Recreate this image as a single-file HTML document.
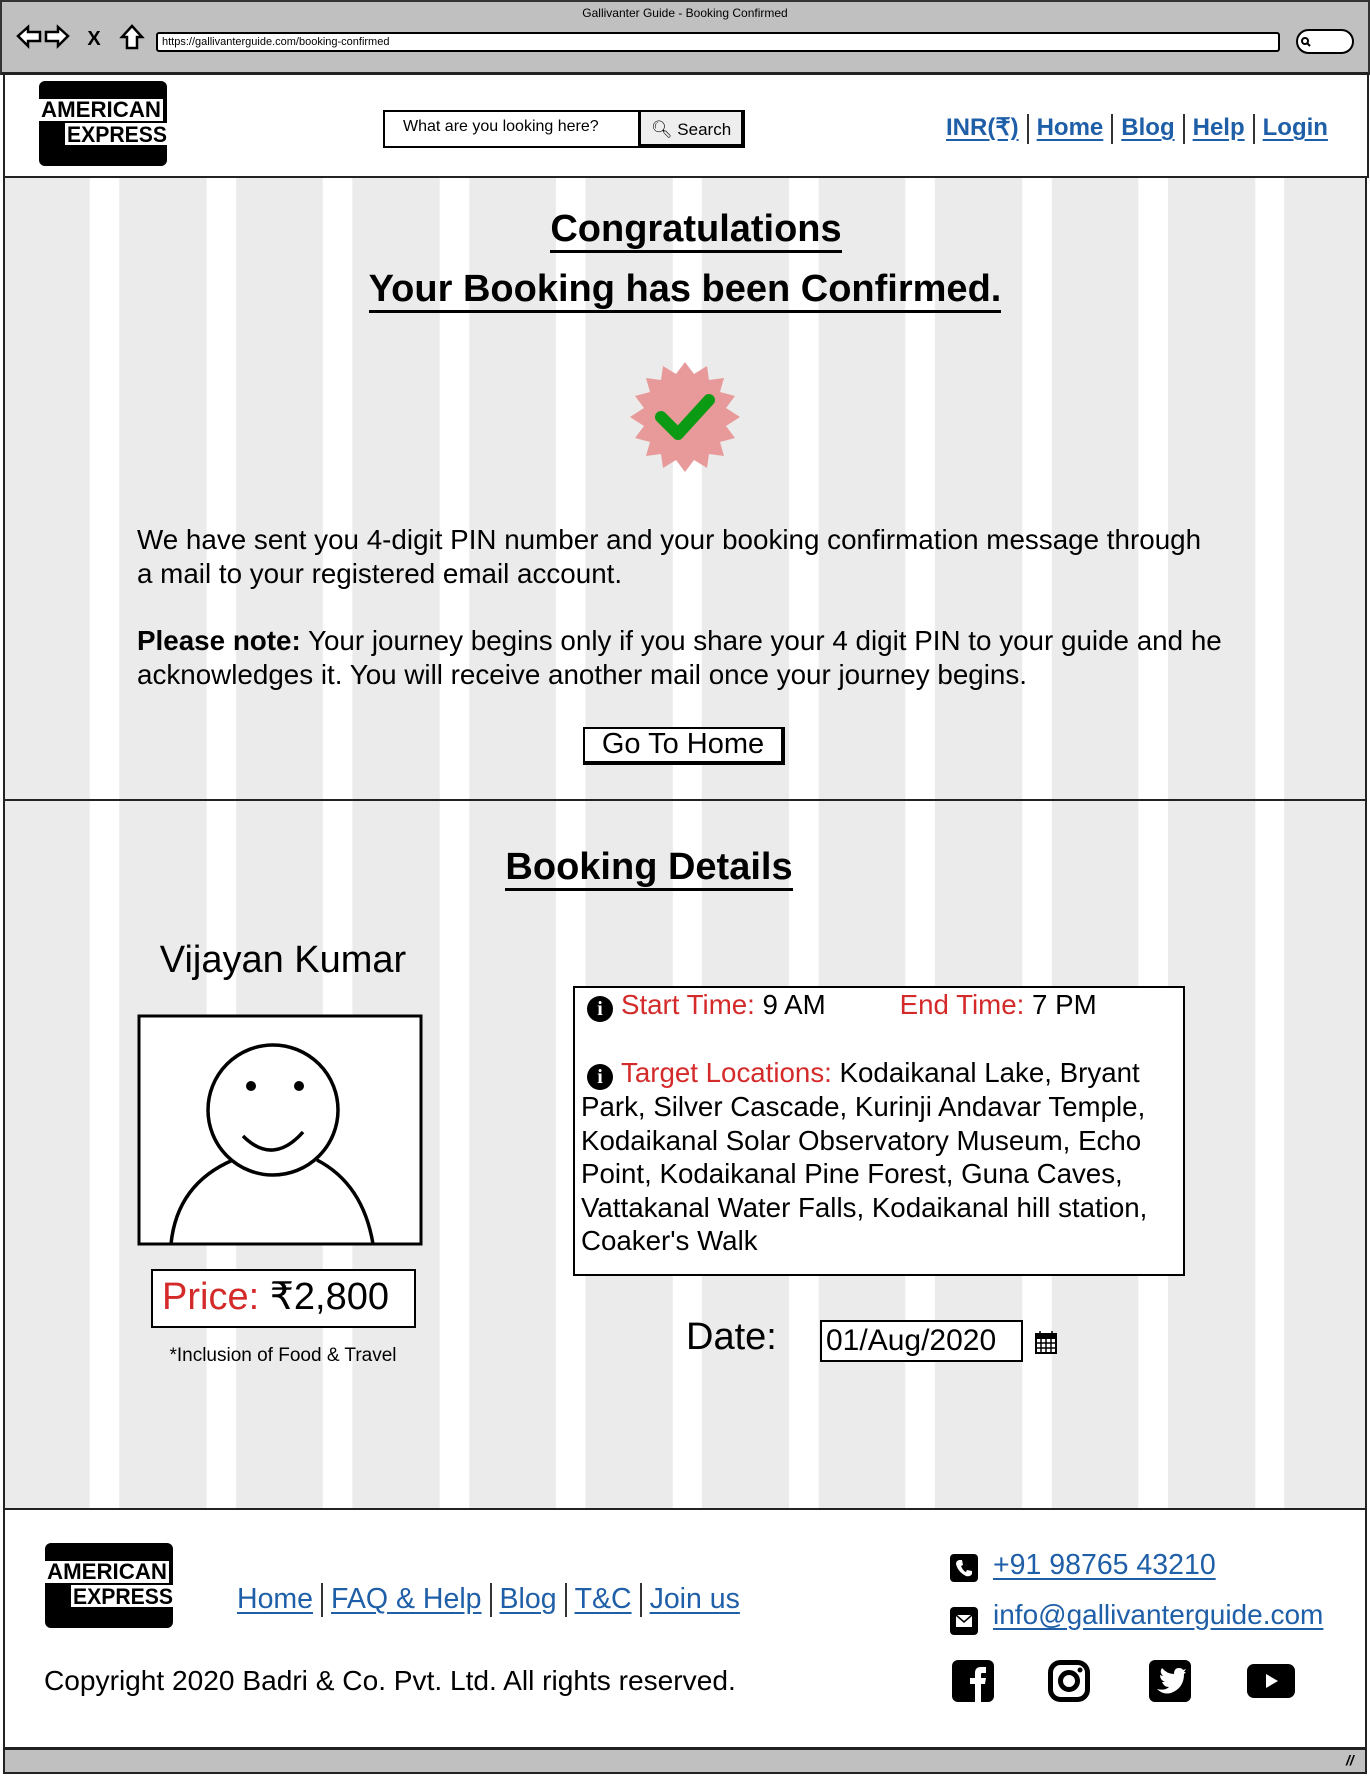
<!DOCTYPE html>
<html><head><meta charset="utf-8"><style>
*{box-sizing:border-box;margin:0;padding:0}
body{width:1370px;height:1776px;position:relative;background:#fff;font-family:"Liberation Sans",sans-serif;color:#000;overflow:hidden}
.a{position:absolute}
.lnk{color:#1f5fa8;text-decoration:underline;text-underline-offset:4px}
.sep{display:inline-block;width:2px;height:30px;background:#333;vertical-align:middle;margin:0 8px}
.c{text-align:center;white-space:nowrap}
.ic{display:inline-block;width:26px;height:26px;border-radius:50%;background:#000;color:#fff;font-weight:bold;font-size:20px;line-height:26px;text-align:center;font-family:'Liberation Serif',serif;vertical-align:-1px;margin:0 8px 0 6px}
</style></head><body>
<!-- browser chrome -->
<div class="a" style="left:0;top:0;width:1370px;height:75px;background:#c0c0c0;border:2px solid #333;border-bottom:3px solid #222"></div>
<div class="a c" style="left:0;width:1370px;top:6px;font-size:12px">Gallivanter Guide - Booking Confirmed</div>
<svg class="a" style="left:14px;top:22px" width="140" height="30" viewBox="0 0 140 30">
<path d="M4 14 L14 5 L14 10 L26 10 L26 19 L14 19 L14 24 Z" fill="#fff" stroke="#000" stroke-width="2.5"/>
<path d="M54 14 L44 5 L44 10 L32 10 L32 19 L44 19 L44 24 Z" fill="#fff" stroke="#000" stroke-width="2.5"/>
<text x="80" y="23" font-size="20" font-weight="bold" font-family="Liberation Sans" text-anchor="middle">X</text>
<path d="M118 4 L128 15 L123 15 L123 26 L113 26 L113 15 L108 15 Z" fill="#fff" stroke="#000" stroke-width="2.5"/>
</svg>
<div class="a" style="left:156px;top:32px;width:1124px;height:20px;background:#fff;border:2px solid #000;border-radius:3px;font-size:11px;padding-left:4px;line-height:16px">https://gallivanterguide.com/booking-confirmed</div>
<div class="a" style="left:1296px;top:29px;width:58px;height:25px;background:#fff;border:2px solid #000;border-radius:13px"></div>
<svg class="a" style="left:1300px;top:36px" width="12" height="12"><circle cx="5" cy="5" r="3" fill="none" stroke="#000" stroke-width="2"/><path d="M7 7 L10 10" stroke="#000" stroke-width="2"/></svg>

<!-- header -->
<div class="a" style="left:3px;top:75px;width:1366px;height:103px;background:#fff;border-left:2px solid #222;border-right:2px solid #222;border-bottom:2px solid #222"></div>
<svg class="a" style="left:39px;top:81px" width="130" height="86" viewBox="0 0 130 86">
<rect x="0" y="0" width="128" height="85" rx="6" fill="#000"/>
<rect x="0" y="18" width="124" height="22" fill="#fff"/><rect x="26" y="42" width="104" height="22" fill="#fff"/>
<text x="2" y="36" font-size="22" font-weight="bold" font-family="Liberation Sans" textLength="120" lengthAdjust="spacingAndGlyphs">AMERICAN</text>
<text x="28" y="61" font-size="22" font-weight="bold" font-family="Liberation Sans" textLength="100" lengthAdjust="spacingAndGlyphs">EXPRESS</text>
</svg>
<div class="a" style="left:383px;top:110px;width:257px;height:38px;background:#fff;border:2px solid #000;font-size:16px;padding:6px 0 0 18px">What are you looking here?</div>
<div class="a" style="left:639px;top:110px;width:106px;height:38px;background:#eee;border:2px solid #000;border-bottom-width:4px;border-right-width:4px;font-size:17px;padding:8px 0 0 10px">&#x1F50D;&#xFE0E; Search</div>
<div class="a" style="left:946px;top:113px;font-size:24px;font-weight:bold;white-space:nowrap"><span class="lnk">INR(₹)</span><span class="sep"></span><span class="lnk">Home</span><span class="sep"></span><span class="lnk">Blog</span><span class="sep"></span><span class="lnk">Help</span><span class="sep"></span><span class="lnk">Login</span></div>

<!-- striped content -->
<div class="a" style="left:3px;top:178px;width:1364px;height:1331px;border-left:2px solid #222;border-right:2px solid #222;background:repeating-linear-gradient(90deg,#ebebeb 0 87px,#fff 87px 116.5px);background-position:-2px 0"></div>
<div class="a" style="left:3px;top:799px;width:1364px;height:2px;background:#222"></div>
<div class="a" style="left:3px;top:1508px;width:1364px;height:2px;background:#222"></div>

<div class="a c" style="left:0;width:1392px;top:208px;font-size:38px;font-weight:bold"><span style="border-bottom:3px solid #000">Congratulations</span></div>
<div class="a c" style="left:0;width:1370px;top:268px;font-size:38px;font-weight:bold"><span style="border-bottom:3px solid #000">Your Booking has been Confirmed.</span></div>

<svg class="a" style="left:628px;top:360px" width="114" height="114" viewBox="-57 -57 114 114">
<polygon fill="#e89a9a" points="0,-55 9,-43 22,-51 24,-37 39,-39 35,-25 50,-21 41,-9 55,0 41,9 50,21 35,25 39,39 24,37 22,51 9,43 0,55 -9,43 -22,51 -24,37 -39,39 -35,25 -50,21 -41,9 -55,0 -41,-9 -50,-21 -35,-25 -39,-39 -24,-37 -22,-51 -9,-43"/>
<path d="M-24 0 L-7 17 L24 -17" fill="none" stroke="#0a9a14" stroke-width="12" stroke-linecap="round" stroke-linejoin="round"/>
</svg>

<div class="a" style="left:137px;top:523px;width:1075px;font-size:27.8px;line-height:34px">We have sent you 4-digit PIN number and your booking confirmation message through a mail to your registered email account.</div>
<div class="a" style="left:137px;top:624px;width:1100px;font-size:27.8px;line-height:34px"><b>Please note:</b> Your journey begins only if you share your 4 digit PIN to your guide and he acknowledges it. You will receive another mail once your journey begins.</div>
<div class="a c" style="left:583px;top:727px;width:202px;height:38px;background:#fff;border:2px solid #000;border-right-width:4px;border-bottom-width:4px;font-size:29px;line-height:30px">Go To Home</div>

<div class="a c" style="left:0;width:1298px;top:846px;font-size:38px;font-weight:bold"><span style="border-bottom:3px solid #000">Booking Details</span></div>
<div class="a c" style="left:140px;width:286px;top:939px;font-size:38px">Vijayan Kumar</div>
<svg class="a" style="left:137px;top:1014px" width="286" height="232" viewBox="0 0 286 232">
<rect x="2" y="2" width="282" height="228" fill="#fff" stroke="#000" stroke-width="3"/>
<circle cx="136" cy="96" r="65" fill="none" stroke="#000" stroke-width="3.5"/>
<circle cx="114" cy="72" r="5"/><circle cx="162" cy="72" r="5"/>
<path d="M106 122 Q136 152 166 118" fill="none" stroke="#000" stroke-width="3.5"/>
<path d="M96 146 Q40 170 34 230 M180 146 Q226 170 236 230" fill="none" stroke="#000" stroke-width="3.5"/>
</svg>
<div class="a" style="left:151px;top:1269px;width:265px;height:59px;background:#fff;border:2px solid #000;font-size:38px;line-height:52px;padding-left:9px;white-space:nowrap"><span style="color:#d42a2a">Price:</span> ₹2,800</div>
<div class="a c" style="left:140px;width:286px;top:1345px;font-size:19px">*Inclusion of Food &amp; Travel</div>

<div class="a" style="left:573px;top:986px;width:612px;height:290px;background:#fff;border:2px solid #000"></div>
<div class="a" style="left:581px;top:988px;width:602px;font-size:27.7px;line-height:33.6px">
<div style="white-space:nowrap"><span class="ic">i</span><span style="color:#d42a2a">Start Time:</span> 9 AM<span style="display:inline-block;width:74px"></span><span style="color:#d42a2a">End Time:</span> 7 PM</div>
<div style="height:34px"></div>
<div><span class="ic">i</span><span style="color:#d42a2a">Target Locations:</span> Kodaikanal Lake, Bryant Park, Silver Cascade, Kurinji Andavar Temple, Kodaikanal Solar Observatory Museum, Echo Point, Kodaikanal Pine Forest, Guna Caves, Vattakanal Water Falls, Kodaikanal hill station, Coaker's Walk</div>
</div>
<div class="a" style="left:686px;top:1316px;font-size:38px">Date:</div>
<div class="a" style="left:820px;top:1320px;width:203px;height:42px;background:#fff;border:2px solid #000;font-size:30px;line-height:38px;padding-left:4px">01/Aug/2020</div>
<svg class="a" style="left:1035px;top:1330px" width="22" height="24" viewBox="0 0 22 24"><rect x="1" y="4" width="20" height="19" fill="#fff" stroke="#000" stroke-width="2"/><rect x="1" y="4" width="20" height="5" fill="#000"/><path d="M5 1v6M17 1v6M1 13h20M1 18h20M6 9v14M11 9v14M16 9v14" stroke="#000" stroke-width="1.5"/></svg>

<!-- footer -->
<div class="a" style="left:3px;top:1510px;width:1364px;height:238px;background:#fff;border-left:2px solid #222;border-right:2px solid #222"></div>
<svg class="a" style="left:45px;top:1543px" width="130" height="86" viewBox="0 0 130 86">
<rect x="0" y="0" width="128" height="85" rx="6" fill="#000"/>
<rect x="0" y="18" width="124" height="22" fill="#fff"/><rect x="26" y="42" width="104" height="22" fill="#fff"/>
<text x="2" y="36" font-size="22" font-weight="bold" font-family="Liberation Sans" textLength="120" lengthAdjust="spacingAndGlyphs">AMERICAN</text>
<text x="28" y="61" font-size="22" font-weight="bold" font-family="Liberation Sans" textLength="100" lengthAdjust="spacingAndGlyphs">EXPRESS</text>
</svg>
<div class="a" style="left:237px;top:1583px;font-size:28.5px;white-space:nowrap"><span class="lnk">Home</span><span class="sep" style="margin:0 8px;height:34px"></span><span class="lnk">FAQ &amp; Help</span><span class="sep" style="margin:0 8px;height:34px"></span><span class="lnk">Blog</span><span class="sep" style="margin:0 8px;height:34px"></span><span class="lnk">T&amp;C</span><span class="sep" style="margin:0 8px;height:34px"></span><span class="lnk">Join us</span></div>
<div class="a" style="left:44px;top:1665px;font-size:28.1px;white-space:nowrap">Copyright 2020 Badri &amp; Co. Pvt. Ltd. All rights reserved.</div>

<svg class="a" style="left:950px;top:1554px" width="28" height="28" viewBox="0 0 28 28"><rect width="28" height="28" rx="4"/><path d="M9 6 L12 6 L13 11 L11 12 Q13 17 16 18 L17 16 L22 17 L22 20 Q20 23 16 22 Q8 18 6 10 Q6 7 9 6Z" fill="#fff"/></svg>
<svg class="a" style="left:950px;top:1607px" width="28" height="28" viewBox="0 0 28 28"><rect width="28" height="28" rx="4"/><rect x="6" y="8" width="16" height="12" fill="#fff"/><path d="M6 8 L14 15 L22 8" fill="none" stroke="#000" stroke-width="1.5"/></svg>
<div class="a" style="left:993px;top:1549px;font-size:28.5px"><span class="lnk">+91 98765 43210</span></div>
<div class="a" style="left:993px;top:1599px;font-size:28px"><span class="lnk">info@gallivanterguide.com</span></div>

<svg class="a" style="left:952px;top:1660px" width="42" height="42" viewBox="0 0 42 42"><rect width="42" height="42" rx="6"/><path d="M23 42 V24 H18 V18 H23 V13 Q23 7 29 7 H34 V13 H30 Q29 13 29 14 V18 H34 L33 24 H29 V42Z" fill="#fff"/></svg>
<svg class="a" style="left:1048px;top:1660px" width="42" height="42" viewBox="0 0 42 42"><rect x="2.5" y="2.5" width="37" height="37" rx="10" fill="none" stroke="#000" stroke-width="5"/><circle cx="21" cy="21" r="8.5" fill="none" stroke="#000" stroke-width="5"/><circle cx="32" cy="10" r="2.5"/></svg>
<svg class="a" style="left:1149px;top:1660px" width="42" height="42" viewBox="0 0 42 42"><rect width="42" height="42" rx="6"/><path d="M8 29 Q16 31 20 27 Q15 27 13 22 Q15 22 16 22 Q11 20 11 15 Q13 16 14 16 Q10 12 13 8 Q18 14 25 14 Q25 8 30 8 Q33 8 34 10 L37 9 L35 12 L37 12 L35 14 Q35 28 22 33 Q14 35 8 29Z" fill="#fff"/></svg>
<svg class="a" style="left:1247px;top:1664px" width="48" height="34" viewBox="0 0 48 34"><rect width="48" height="34" rx="7"/><path d="M19 10 L31 17 L19 24Z" fill="#fff"/></svg>

<div class="a" style="left:3px;top:1747px;width:1364px;height:27px;background:#c0c0c0;border:2px solid #222;border-top:3px solid #222"></div>
<div class="a" style="left:1346px;top:1752px;font-size:14px;font-style:italic;font-weight:bold">//</div>
</body></html>
